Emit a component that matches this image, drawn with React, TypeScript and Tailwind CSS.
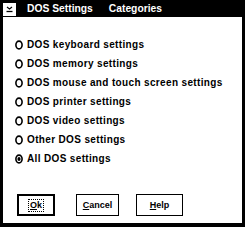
import React from "react";

const items = [
  "DOS keyboard settings",
  "DOS memory settings",
  "DOS mouse and touch screen settings",
  "DOS printer settings",
  "DOS video settings",
  "Other DOS settings",
  "All DOS settings",
];

function Radio({ checked }: { checked: boolean }) {
  return (
    <svg width="8" height="10" viewBox="0 0 8 10" className="shrink-0">
      <ellipse cx="4" cy="5" rx="3.1" ry="3.9" fill="white" stroke="black" strokeWidth="1.6" />
      {checked && <ellipse cx="4" cy="5" rx="1.6" ry="2" fill="black" />}
    </svg>
  );
}

export default function App() {
  return (
    <div
      className="w-[245px] h-[227px] bg-black flex flex-col pl-[3px] pr-[3px] pb-[4px] overflow-hidden"
      style={{ fontFamily: '"Liberation Sans", Arial, sans-serif' }}
    >
      <div className="h-[17px] flex items-start shrink-0">
        <div className="w-[13px] h-[13px] mt-[3px] bg-white flex items-center justify-center">
          <svg width="9" height="9" viewBox="0 0 9 9">
            <path d="M2 2 L4.5 4 L7 2" fill="none" stroke="black" strokeWidth="1.2" />
            <line x1="1.5" y1="6.5" x2="7.5" y2="6.5" stroke="black" strokeWidth="1.3" />
          </svg>
        </div>
        <div className="ml-[11px] mt-[2px] text-white font-bold text-[10.3px] leading-[13px] flex">
          <span>DOS Settings</span>
          <span className="ml-[16px]">Categories</span>
        </div>
      </div>
      <div className="flex-1 bg-white flex flex-col pt-[18px]">
        {items.map((t, i) => (
          <div key={t} className="h-[19px] flex items-center pl-[12px]">
            <Radio checked={i === items.length - 1} />
            <span className="ml-[4px] text-black font-bold text-[10px] tracking-[0.35px] leading-[12px]">{t}</span>
          </div>
        ))}
        <div className="flex mt-[26px] pl-[14px]">
          <div className="w-[38px] h-[22px] border-2 border-black flex items-center justify-center">
            <span className="text-[9px] font-bold leading-[11px] text-black px-[1px] border border-dotted border-black">
              <span className="underline">O</span>k
            </span>
          </div>
          <div className="w-[43px] h-[22px] ml-[21px] border border-black flex items-center justify-center">
            <span className="text-[9px] font-bold leading-[11px] text-black">
              <span className="underline">C</span>ancel
            </span>
          </div>
          <div className="w-[47px] h-[22px] ml-[17px] border border-black flex items-center justify-center">
            <span className="text-[9px] font-bold leading-[11px] text-black">
              <span className="underline">H</span>elp
            </span>
          </div>
        </div>
      </div>
    </div>
  );
}
